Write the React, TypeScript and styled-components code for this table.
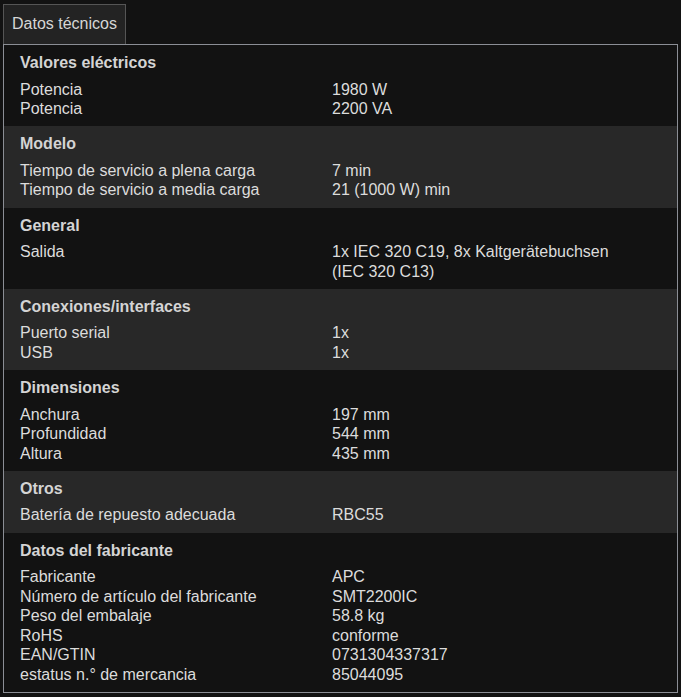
import React from "react";
import styled, { createGlobalStyle } from "styled-components";

interface TypesSpecRow {
  label: string
  value: string[]
}

interface TypesSpecSection {
  title: string
  rows: TypesSpecRow[]
}

const GlobalStyle = createGlobalStyle`
  html, body {
    margin: 0;
    background: #121212;
  }
  body {
    padding: 4px 3px 0 3px;
    font-family: "Liberation Sans", Arial, sans-serif;
    font-size: 16px;
    color: #dcdcdc;
  }
`

const specsData: TypesSpecSection[] = [
  {
    title: 'Valores eléctricos',
    rows: [
      { label: 'Potencia', value: ['1980 W'] },
      { label: 'Potencia', value: ['2200 VA'] },
    ],
  },
  {
    title: 'Modelo',
    rows: [
      { label: 'Tiempo de servicio a plena carga', value: ['7 min'] },
      { label: 'Tiempo de servicio a media carga', value: ['21 (1000 W) min'] },
    ],
  },
  {
    title: 'General',
    rows: [
      { label: 'Salida', value: ['1x IEC 320 C19, 8x Kaltgerätebuchsen', '(IEC 320 C13)'] },
    ],
  },
  {
    title: 'Conexiones/interfaces',
    rows: [
      { label: 'Puerto serial', value: ['1x'] },
      { label: 'USB', value: ['1x'] },
    ],
  },
  {
    title: 'Dimensiones',
    rows: [
      { label: 'Anchura', value: ['197 mm'] },
      { label: 'Profundidad', value: ['544 mm'] },
      { label: 'Altura', value: ['435 mm'] },
    ],
  },
  {
    title: 'Otros',
    rows: [
      { label: 'Batería de repuesto adecuada', value: ['RBC55'] },
    ],
  },
  {
    title: 'Datos del fabricante',
    rows: [
      { label: 'Fabricante', value: ['APC'] },
      { label: 'Número de artículo del fabricante', value: ['SMT2200IC'] },
      { label: 'Peso del embalaje', value: ['58.8 kg'] },
      { label: 'RoHS', value: ['conforme'] },
      { label: 'EAN/GTIN', value: ['0731304337317'] },
      { label: 'estatus n.° de mercancia', value: ['85044095'] },
    ],
  },
]

const Wrapper = styled.div`
  display: flex;
  flex-direction: column;
`

const TabBar = styled.div`
  display: flex;
`

const Tab = styled.div`
  background: #232323;
  border: 1px solid #555555;
  border-bottom: none;
  padding: 9px 8px 11px 8px;
  line-height: 19px;
  color: #d6d6d6;
`

const Panel = styled.div`
  border: 1px solid #8b8e95;
  display: flex;
  flex-direction: column;
`

const Section = styled.section<{ $shaded: boolean }>`
  background: ${({ $shaded }) => ($shaded ? '#282828' : '#121212')};
  padding: 8px 16px 7.75px 16px;
`

const SectionTitle = styled.h3`
  margin: 0 0 7px 0;
  font-size: 16px;
  font-weight: bold;
  line-height: 19.5px;
  color: #d4d4d4;
`

const Rows = styled.div`
  display: grid;
  grid-template-columns: 312px 1fr;
  line-height: 19.5px;
`

const Label = styled.div``

const Value = styled.div``

const SpecSection = ({ data, shaded }: { data: TypesSpecSection, shaded: boolean }) => {
  return (
    <Section $shaded={shaded}>
      <SectionTitle>{data.title}</SectionTitle>
      <Rows>
        {data.rows.map((row, i) => (
          <React.Fragment key={i}>
            <Label>{row.label}</Label>
            <Value>
              {row.value.map((line, j) => (
                <div key={j}>{line}</div>
              ))}
            </Value>
          </React.Fragment>
        ))}
      </Rows>
    </Section>
  )
}

const App = () => {
  return (
    <>
      <GlobalStyle />
      <Wrapper>
        <TabBar>
          <Tab>Datos técnicos</Tab>
        </TabBar>
        <Panel>
          {specsData.map((item, i) => (
            <SpecSection key={item.title} data={item} shaded={i % 2 === 1} />
          ))}
        </Panel>
      </Wrapper>
    </>
  )
}

export default App
